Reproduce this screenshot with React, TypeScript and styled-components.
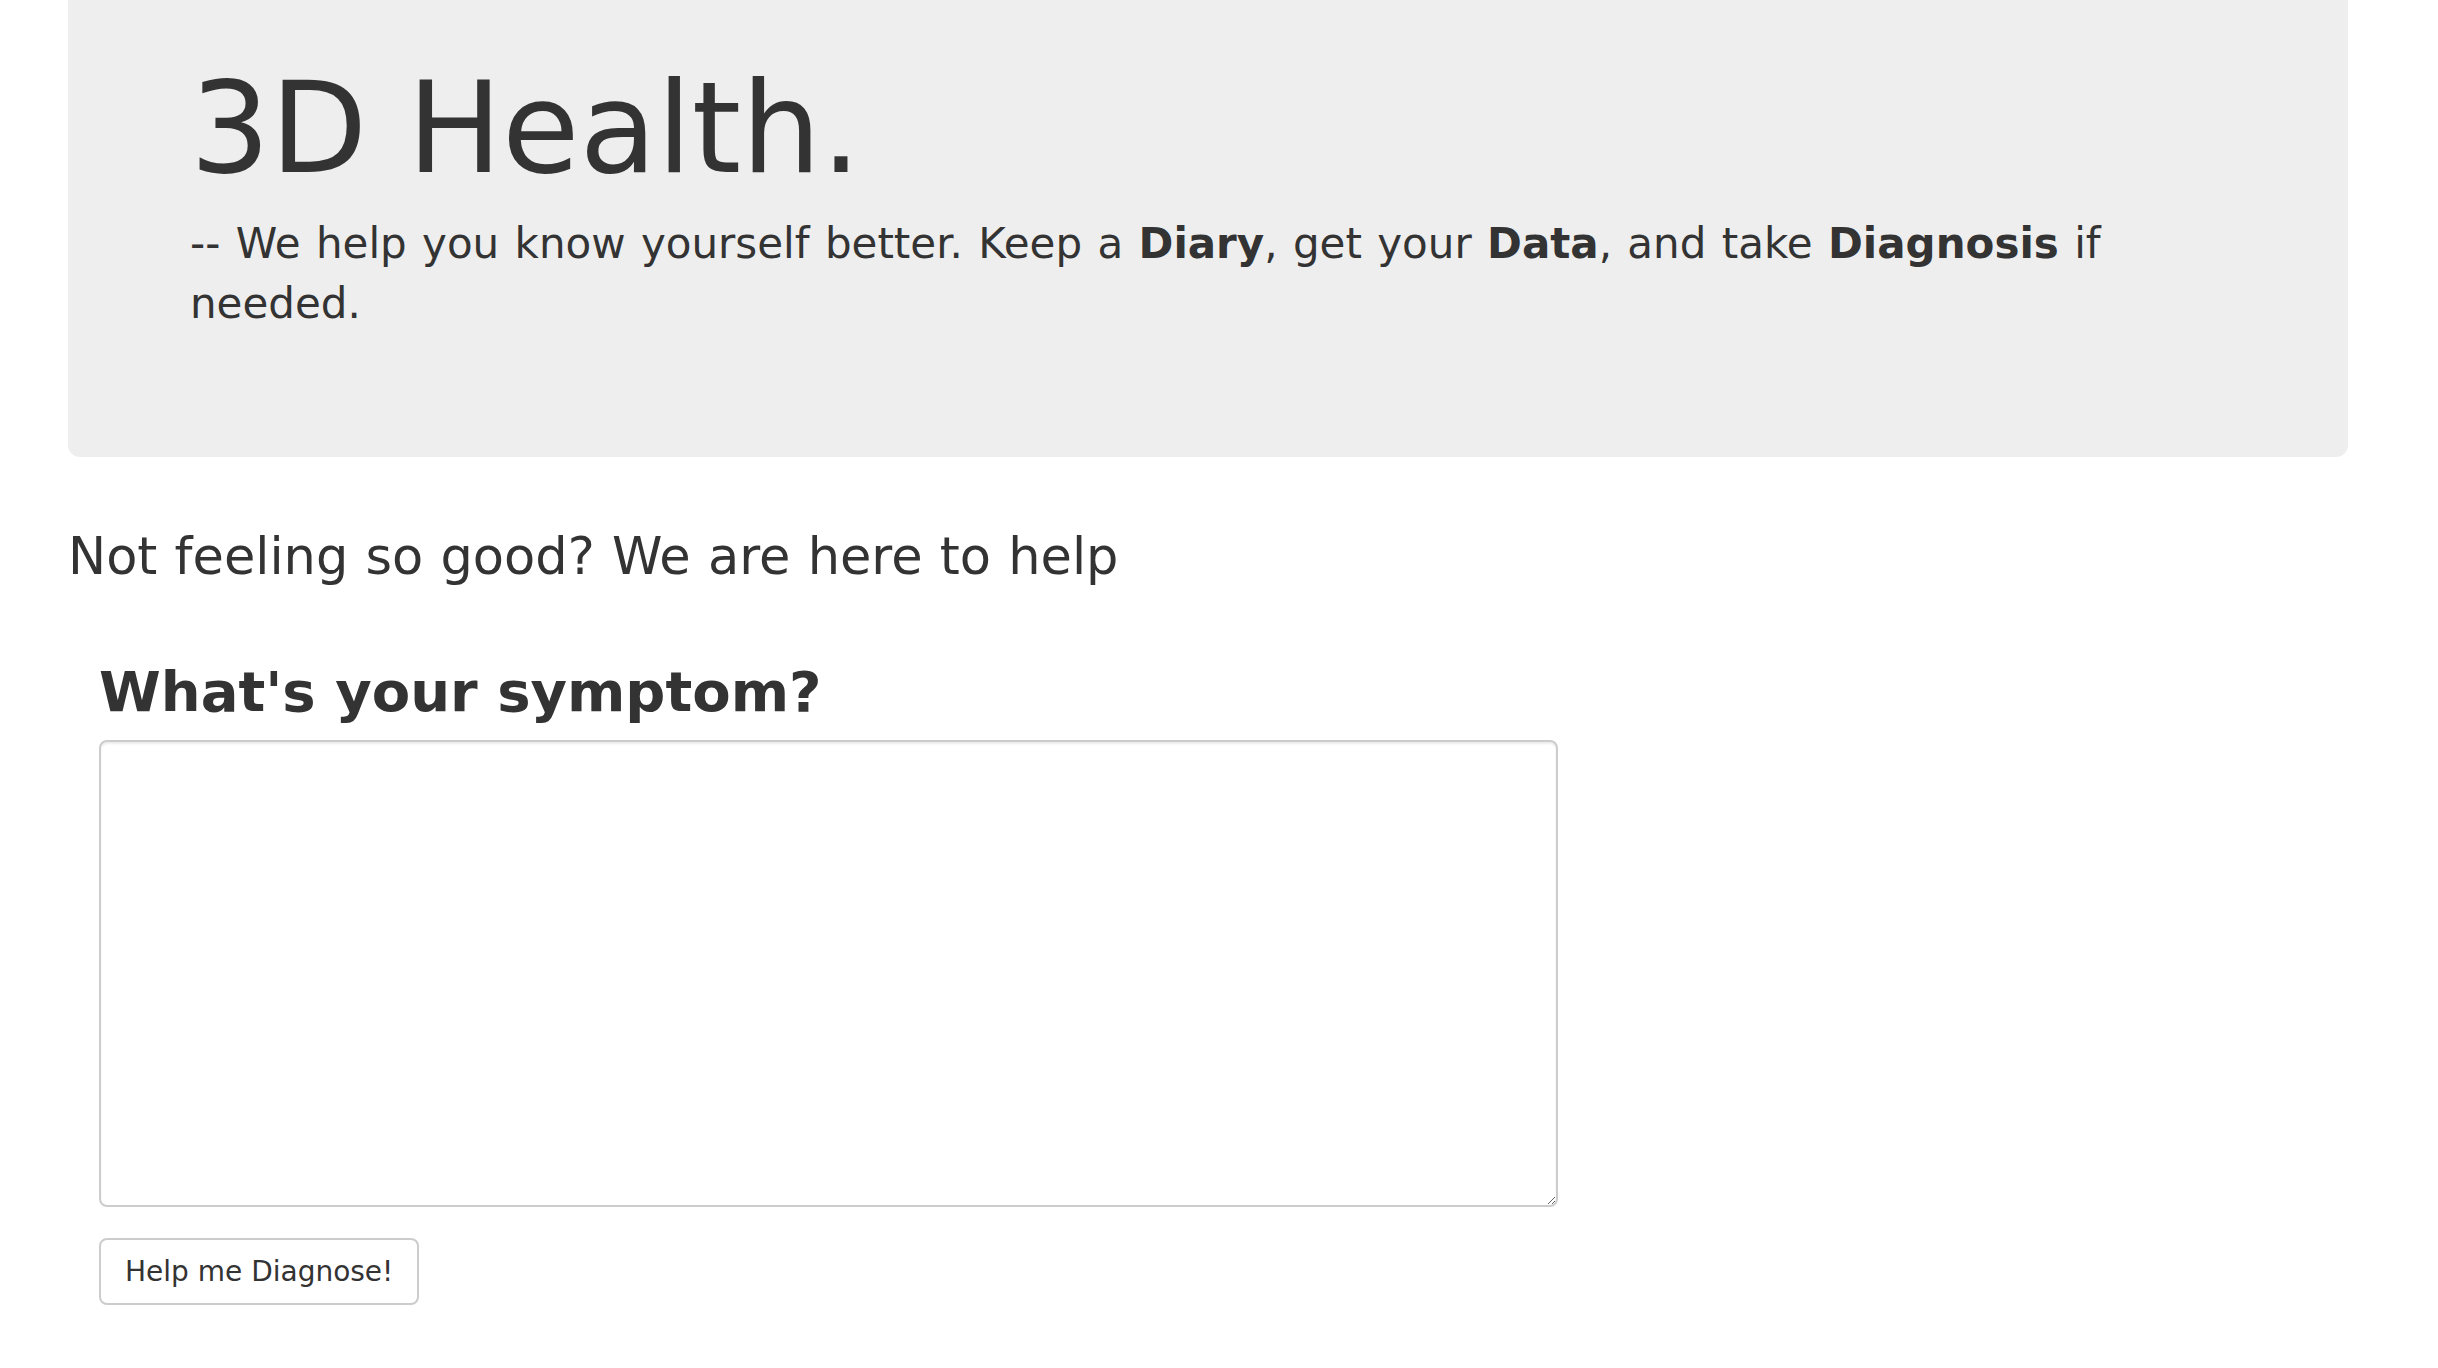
import React, { useState } from 'react';
import styled, { createGlobalStyle } from 'styled-components';

const GlobalStyle = createGlobalStyle`
  html, body {
    margin: 0;
    padding: 0;
    background: #fff;
  }
  body {
    font-family: "DejaVu Sans", Verdana, sans-serif;
    color: #333;
  }
  * {
    box-sizing: border-box;
  }
`;

const Page = styled.div`
  padding: 0 90px 0 68px;
`;

const Jumbotron = styled.header`
  background-color: #eee;
  border-radius: 0 0 12px 12px;
  padding: 60px 122px 123px 122px;
`;

const Title = styled.h1`
  margin: 0;
  font-size: 126px;
  font-weight: 400;
  line-height: 1.1;
  color: #333;
`;

const Tagline = styled.p`
  margin: 15px 0 0 0;
  font-size: 42px;
  line-height: 60px;
  font-weight: 400;
  word-spacing: 2px;
`;

const Intro = styled.h3`
  margin: 72px 0 0 0;
  font-size: 51px;
  font-weight: 400;
  line-height: 1.1;
  word-spacing: 1px;
`;

const Form = styled.form`
  display: flex;
  flex-direction: column;
  align-items: flex-start;
  padding-left: 31px;
  margin-top: 76px;
`;

const Label = styled.label`
  font-size: 56px;
  font-weight: 700;
  line-height: 1.1;
  margin-bottom: 18px;
`;

const SymptomInput = styled.textarea`
  width: 1459px;
  height: 467px;
  border: 2px solid #ccc;
  border-radius: 8px;
  box-shadow: inset 0 2px 2px rgba(0, 0, 0, 0.075);
  padding: 12px 24px;
  font-family: "DejaVu Sans", Verdana, sans-serif;
  font-size: 28px;
  color: #555;
  outline: none;
  resize: vertical;
`;

const Button = styled.button`
  margin-top: 31px;
  height: 67px;
  padding: 0 24px;
  background: #fff;
  border: 2px solid #ccc;
  border-radius: 8px;
  font-family: "DejaVu Sans", Verdana, sans-serif;
  font-size: 28px;
  color: #333;
  cursor: pointer;
`;

const App: React.FC = () => {
  const [symptom, setSymptom] = useState('');

  return (
    <>
      <GlobalStyle />
      <Page>
        <Jumbotron>
          <Title>3D Health.</Title>
          <Tagline>
            -- We help you know yourself better. Keep a <b>Diary</b>, get your <b>Data</b>, and take{' '}
            <b>Diagnosis</b> if needed.
          </Tagline>
        </Jumbotron>

        <Intro>Not feeling so good? We are here to help</Intro>

        <Form onSubmit={(e) => e.preventDefault()}>
          <Label htmlFor="symptom">What's your symptom?</Label>
          <SymptomInput id="symptom" value={symptom} onChange={(e) => setSymptom(e.target.value)} />
          <Button type="submit">Help me Diagnose!</Button>
        </Form>
      </Page>
    </>
  );
};

export default App;
